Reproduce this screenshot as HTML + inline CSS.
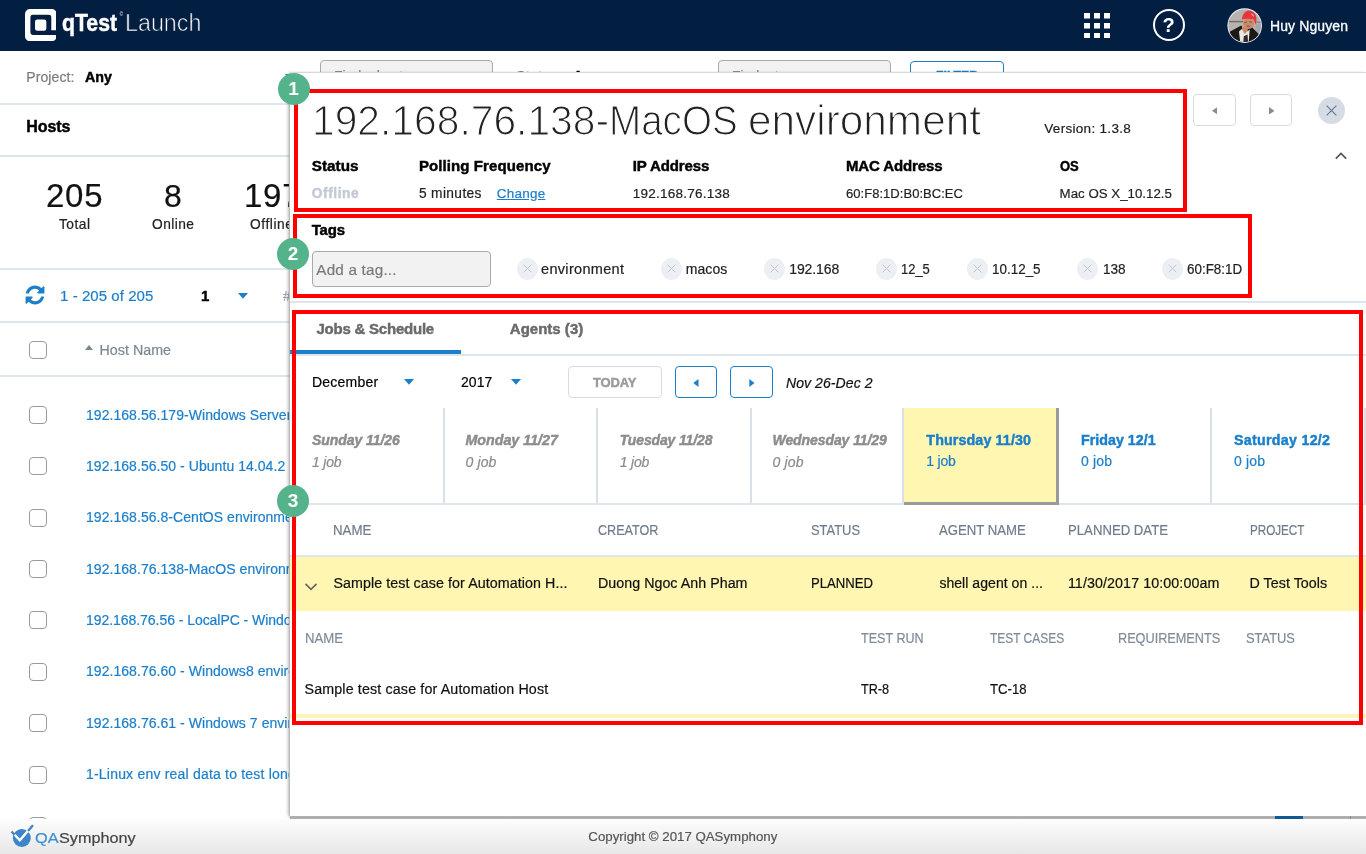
<!DOCTYPE html>
<html lang="en">
<head>
<meta charset="utf-8">
<title>qTest Launch - Hosts</title>
<style>
html,body{margin:0;padding:0}
body{width:1366px;height:854px;overflow:hidden;position:relative;background:#fff;font-family:"Liberation Sans",Arial,sans-serif;color:#111}
.abs,.t,.ln,.cb,svg{position:absolute}
.t{white-space:nowrap;line-height:1;transform-origin:0 50%;-webkit-text-stroke:.2px}
.g{will-change:transform}
.b{font-weight:bold;-webkit-text-stroke:.45px}.i{font-style:italic}.u{text-decoration:underline}
.thin{-webkit-text-stroke:1.2px #fff}
.thin-d{-webkit-text-stroke:.7px #021f42}
.sb{-webkit-text-stroke:.3px #fff}
.sbg{-webkit-text-stroke:.3px #444}
#hdr{position:absolute;left:0;top:0;width:1366px;height:51px;background:#021f42}
#app{position:absolute;left:0;top:51px;width:1366px;height:768px;overflow:hidden}
#app>.in{position:absolute;left:0;top:-51px;width:1366px;height:854px}
.ln{left:0;width:1366px;height:2px;background:#dfe5ec}
.cb{left:29px;width:16px;height:16px;border:1px solid #9a9a9a;border-radius:4px;background:#fff}
.inp{position:absolute;height:34px;box-sizing:border-box;border:1px solid #a9a9a9;border-radius:4px;background:#f2f2f2}
#panel{position:absolute;left:290px;top:73px;width:1076px;height:743px;background:#fff;box-shadow:-1px 0 0 #b9b9b9,0 -1px 0 #d9d9d9,0 2px 2px #999,-2px 0 3px rgba(0,0,0,.25);overflow:hidden}
#panel>.in{position:absolute;left:-290px;top:-73px;width:1366px;height:854px}
.red{position:absolute;box-sizing:border-box;border:4px solid #f00}
.badge{position:absolute;width:32px;height:32px;border-radius:50%;background:#55b38b;color:#fff;font-weight:bold;font-size:19px;line-height:32px;text-align:center}
.btn{position:absolute;box-sizing:border-box;border:1px solid #d3dbe6;border-radius:4px;background:#fff}
.btn.bl{border-color:#1b7fcb}
.tagx{position:absolute;width:21px;height:21.500px;border-radius:50%;background:#eceff3}
.tagx svg{left:6px;top:6.200px}
.vl{position:absolute;top:408px;width:2px;height:95px;background:#d9e0e9}
#foot{position:absolute;left:0;top:819px;width:1366px;height:35px;background:linear-gradient(#fdfdfd,#f3f3f3 45%,#e7e7e7)}
</style>
</head>
<body>
<div id="app"><div class="in g">
<!-- filter bar -->
<div class="inp" style="left:320px;top:60px;width:173px"></div>
<div class="inp" style="left:718px;top:60px;width:173px"></div>
<div class="btn bl" style="left:910px;top:61px;width:94px;height:32px"></div>
<span class="t" style="left:26.3px;top:70.0px;font-size:14px;letter-spacing:0.08px;color:#7b7b7b;">Project:</span>
<span class="t b" style="left:85.0px;top:70.0px;font-size:14.25px;letter-spacing:0.04px;color:#000;">Any</span>
<span class="t" style="left:516.0px;top:69.3px;font-size:14.5px;letter-spacing:0.14px;color:#7b7b7b;">Status:</span>
<span class="t b" style="left:573.0px;top:69.3px;font-size:14.25px;letter-spacing:0.04px;color:#000;">Any</span>
<span class="t" style="left:334.0px;top:69.3px;font-size:14px;color:#8a8a8a;">Find a host</span>
<span class="t" style="left:732.0px;top:69.3px;font-size:14px;color:#8a8a8a;">Find a tag</span>
<span class="t b" style="left:936.0px;top:69.2px;font-size:13px;transform:scaleX(0.9432);color:#1b7fcb;">FILTER</span>
<span class="t b" style="left:26.3px;top:119.0px;font-size:16px;letter-spacing:-0.11px;color:#000;">Hosts</span>
<span class="t" style="left:46.0px;top:179.0px;font-size:33px;letter-spacing:0.72px;color:#111;">205</span>
<span class="t" style="left:59.0px;top:218.1px;font-size:13.75px;letter-spacing:0.49px;color:#222;">Total</span>
<span class="t" style="left:164.0px;top:180.0px;font-size:32px;color:#111;">8</span>
<span class="t" style="left:152.0px;top:218.1px;font-size:13.75px;letter-spacing:0.45px;color:#222;">Online</span>
<span class="t" style="left:244.0px;top:179.0px;font-size:33px;letter-spacing:0.72px;color:#111;">197</span>
<span class="t" style="left:250.0px;top:218.1px;font-size:13.75px;letter-spacing:0.58px;color:#222;">Offline</span>
<span class="t" style="left:60.0px;top:287.6px;font-size:15px;letter-spacing:0.06px;color:#1b7fcb;">1 - 205 of 205</span>
<span class="t b" style="left:201.0px;top:287.6px;font-size:15px;color:#000;">1</span>
<span class="t" style="left:283.0px;top:288.6px;font-size:14px;color:#9aa4b0;">#</span>
<span class="t" style="left:99.5px;top:342.6px;font-size:14.25px;letter-spacing:0.03px;color:#7b8794;">Host Name</span>
<span class="t" style="left:86.0px;top:407.6px;font-size:14px;letter-spacing:0.05px;color:#1b7fcb;">192.168.56.179-Windows Server 2012</span>
<span class="t" style="left:86.0px;top:458.9px;font-size:14px;letter-spacing:0.05px;color:#1b7fcb;">192.168.56.50 - Ubuntu 14.04.2 LTS</span>
<span class="t" style="left:86.0px;top:510.3px;font-size:14px;letter-spacing:0.05px;color:#1b7fcb;">192.168.56.8-CentOS environment</span>
<span class="t" style="left:86.0px;top:561.7px;font-size:14px;letter-spacing:0.05px;color:#1b7fcb;">192.168.76.138-MacOS environment</span>
<span class="t" style="left:86.0px;top:613.1px;font-size:14px;letter-spacing:-0.05px;color:#1b7fcb;">192.168.76.56 - LocalPC - Windows 10</span>
<span class="t" style="left:86.0px;top:664.4px;font-size:14px;letter-spacing:0.05px;color:#1b7fcb;">192.168.76.60 - Windows8 environment</span>
<span class="t" style="left:86.0px;top:715.7px;font-size:14px;letter-spacing:0.05px;color:#1b7fcb;">192.168.76.61 - Windows 7 environment</span>
<span class="t" style="left:86.0px;top:767.1px;font-size:14px;letter-spacing:0.20px;color:#1b7fcb;">1-Linux env real data to test long name</span>
<div class="ln" style="top:102.500px"></div>
<div class="ln" style="top:154.500px"></div>
<div class="ln" style="top:267.500px"></div>
<div class="ln" style="top:320.500px"></div>
<div class="ln" style="top:375px"></div>
<svg style="left:24px;top:284px" width="22" height="22" viewBox="0 0 1792 1792"><path fill="#1b7fcb" d="M1639 1056q0 5-1 7-64 268-268 434.500t-478 166.500q-146 0-282.500-55t-243.500-157l-129 129q-19 19-45 19t-45-19-19-45v-448q0-26 19-45t45-19h448q26 0 45 19t19 45-19 45l-137 137q71 66 161 102t187 36q134 0 250-65t186-179q11-17 53-117 8-23 30-23h192q13 0 22.500 9.500t9.500 22.500zm25-800v448q0 26-19 45t-45 19h-448q-26 0-45-19t-19-45 19-45l138-138q-148-137-349-137-134 0-250 65t-186 179q-11 17-53 117-8 23-30 23h-199q-13 0-22.500-9.500t-9.500-22.500v-7q65-268 270-434.500t480-166.500q146 0 284 55.500t245 156.500l130-129q19-19 45-19t45 19 19 45z"/></svg>
<svg style="left:284.600px;top:73.500px" width="10" height="6" viewBox="0 0 10 6"><path fill="#1b7fcb" d="M0 0h10L5 5.800z"/></svg>
<svg style="left:238px;top:292.500px" width="10" height="6" viewBox="0 0 10 6"><path fill="#1b7fcb" d="M0 0h10L5 5.800z"/></svg>
<svg style="left:85px;top:344.500px" width="8" height="5" viewBox="0 0 8 5"><path fill="#7b8794" d="M0 5h8L4 0z"/></svg>
<div class="cb" style="top:340.500px"></div>
<div class="cb" style="top:406.0px"></div>
<div class="cb" style="top:457.4px"></div>
<div class="cb" style="top:508.7px"></div>
<div class="cb" style="top:560.1px"></div>
<div class="cb" style="top:611.4px"></div>
<div class="cb" style="top:662.8px"></div>
<div class="cb" style="top:714.2px"></div>
<div class="cb" style="top:765.5px"></div>
<div class="cb" style="top:816.9px"></div>

</div></div>

<header id="hdr" class="g">
<svg style="left:24.700px;top:8.800px" width="31.700" height="32.100" viewBox="0 0 31.700 32.500" preserveAspectRatio="none"><path fill="#fff" fill-rule="evenodd" d="M5 0h21.700a5 5 0 0 1 5 5v16.400h-5.400V8.200a2.500 2.500 0 0 0-2.500-2.500H7.900a2.500 2.500 0 0 0-2.500 2.500v15.600a2.500 2.500 0 0 0 2.500 2.500h23.800v1.200a5 5 0 0 1-5 5H5a5 5 0 0 1-5-5V5a5 5 0 0 1 5-5z"/><rect x="10.050" y="10.700" width="11.300" height="11.300" rx="2.200" fill="#fff"/></svg>
<span class="t b" style="left:62.1px;top:11.5px;font-size:23px;transform:scaleX(0.9222);color:#fff;">qTest</span>
<span class="t thin-d" style="left:124.9px;top:11.5px;font-size:23.5px;transform:scaleX(0.9908);color:#fff;">Launch</span>
<span class="t sb" style="left:1270.0px;top:18.7px;font-size:14px;letter-spacing:0.11px;color:#fff;">Huy Nguyen</span>
<span class="t" style="left:119.800px;top:12.800px;font-size:4.500px;color:#8b98ad">©</span>
<svg style="left:1084px;top:12.500px" width="26" height="25.500" viewBox="0 0 26 25.500"><g fill="#fff"><rect x="0" y="0" width="6" height="5.500"/><rect x="10" y="0" width="6" height="5.500"/><rect x="20" y="0" width="6" height="5.500"/><rect x="0" y="10" width="6" height="5.500"/><rect x="10" y="10" width="6" height="5.500"/><rect x="20" y="10" width="6" height="5.500"/><rect x="0" y="20" width="6" height="5.500"/><rect x="10" y="20" width="6" height="5.500"/><rect x="20" y="20" width="6" height="5.500"/></g></svg>
<div class="abs" style="left:1152.500px;top:9.300px;width:28px;height:28px;border:2px solid #fff;border-radius:50%;color:#fff;font-weight:bold;font-size:20px;line-height:29px;text-align:center">?</div>
<svg style="left:1226.500px;top:8px" width="35.500" height="35.500" viewBox="0 0 35.500 35.500"><defs><clipPath id="av"><circle cx="17.700" cy="17.600" r="16.400"/></clipPath></defs><circle cx="17.700" cy="17.600" r="17.300" fill="#eef1f5"/><g clip-path="url(#av)"><rect width="36" height="36" fill="#b7b3b0"/><rect x="0" y="12.900" width="16" height="1.400" fill="#6f6b68"/><rect x="28" y="13.500" width="8" height="1.600" fill="#8d8988"/><rect x="28.500" y="16" width="7" height="12" fill="#a9a7ac"/><path d="M0 36V26l3.600-2.800 10.700-5.600 3 4 7.700-2.300 6.100 6.200 4.400 4V36z" fill="#1c1815"/><path d="M14.800 18.500l6 1.500v5.500l-4.800 2.500z" fill="#c48a69"/><path d="M12 23.500l3-2.700 2.300 5.200 5.400-4.500-1 12.500h-8.500z" fill="#ebe8e4"/><path d="M16.800 28.200l3.700-1.700.6 8h-4.800z" fill="#2e2a35"/><ellipse cx="21.600" cy="15.400" rx="5.600" ry="5.500" fill="#c98d6c"/><path d="M17.500 14.500l2.500-.5M22.500 13.800l2.500.4M19.500 18l3.500.3" stroke="#7a4a38" stroke-width=".9" fill="none"/><path d="M14.850 11.600c.3-5 3.300-9.200 7.300-9.200 4.500 0 7.300 4 7.300 8.400 0 2-.4 4.200-1.200 5.700-.5-2.200-1-4-2-5.200-3.800-.8-8-.7-11.400.3z" fill="#e8363f"/><path d="M24.500 5.500l2.200 2.800" stroke="#f4a9ab" stroke-width="1.200"/></g></svg>
</header>

<aside id="panel"><div class="in g">
<!-- shapes -->
<div class="red" style="left:294px;top:89px;width:893px;height:123px"></div>
<div class="red" style="left:293px;top:214px;width:959px;height:84px"></div>
<div class="ln" style="left:290px;top:300.500px"></div>
<div class="btn" style="left:1193px;top:93.700px;width:43px;height:32px"></div>
<div class="btn" style="left:1250px;top:93.700px;width:42px;height:32px"></div>
<svg style="left:1211.500px;top:106.800px" width="5.500" height="7.600" viewBox="0 0 5.500 7.600"><path fill="#8c8c8c" d="M5.500 0v7.600L0 3.800z"/></svg>
<svg style="left:1268.700px;top:106.800px" width="5.500" height="7.600" viewBox="0 0 5.500 7.600"><path fill="#8c8c8c" d="M0 0v7.600L5.500 3.800z"/></svg>
<div class="abs" style="left:1318px;top:96.700px;width:27px;height:27px;border-radius:50%;background:#d5dce6"></div>
<svg style="left:1326px;top:104.700px" width="11" height="11" viewBox="0 0 11 11"><path d="M.6.600l9.800 9.800M10.400.600L.6 10.400" stroke="#66758a" stroke-width="1.100" fill="none"/></svg>
<svg style="left:1333.500px;top:151px" width="14" height="9" viewBox="0 0 14 9"><path d="M1.800 7.600L7 2.400l5.200 5.200" stroke="#555" stroke-width="1.700" fill="none"/></svg>
<div class="inp" style="left:312px;top:251.200px;width:178.500px;height:35.600px"></div>

<div class="tagx" style="left:516.5px;top:258.300px"><svg width="9" height="9" viewBox="0 0 9 9"><path d="M.7.700l7.600 7.600M8.300.700L.7 8.300" stroke="#c0c6cf" stroke-width="1" fill="none"/></svg></div>
<div class="tagx" style="left:660.8px;top:258.300px"><svg width="9" height="9" viewBox="0 0 9 9"><path d="M.7.700l7.600 7.600M8.300.700L.7 8.300" stroke="#c0c6cf" stroke-width="1" fill="none"/></svg></div>
<div class="tagx" style="left:764.2px;top:258.300px"><svg width="9" height="9" viewBox="0 0 9 9"><path d="M.7.700l7.600 7.600M8.300.700L.7 8.300" stroke="#c0c6cf" stroke-width="1" fill="none"/></svg></div>
<div class="tagx" style="left:875.9px;top:258.300px"><svg width="9" height="9" viewBox="0 0 9 9"><path d="M.7.700l7.600 7.600M8.300.700L.7 8.300" stroke="#c0c6cf" stroke-width="1" fill="none"/></svg></div>
<div class="tagx" style="left:966.9px;top:258.300px"><svg width="9" height="9" viewBox="0 0 9 9"><path d="M.7.700l7.600 7.600M8.300.700L.7 8.300" stroke="#c0c6cf" stroke-width="1" fill="none"/></svg></div>
<div class="tagx" style="left:1076.9px;top:258.300px"><svg width="9" height="9" viewBox="0 0 9 9"><path d="M.7.700l7.600 7.600M8.300.700L.7 8.300" stroke="#c0c6cf" stroke-width="1" fill="none"/></svg></div>
<div class="tagx" style="left:1162.1px;top:258.300px"><svg width="9" height="9" viewBox="0 0 9 9"><path d="M.7.700l7.600 7.600M8.300.700L.7 8.300" stroke="#c0c6cf" stroke-width="1" fill="none"/></svg></div>
<!-- tabs -->
<div class="ln" style="left:290px;top:354px"></div>
<div class="abs" style="left:290px;top:349.500px;width:170.500px;height:4.500px;background:#1b7fcb"></div>
<svg style="left:404px;top:378.500px" width="10" height="6" viewBox="0 0 10 6"><path fill="#1b7fcb" d="M0 0h10L5 5.800z"/></svg>
<svg style="left:510.500px;top:378.500px" width="10" height="6" viewBox="0 0 10 6"><path fill="#1b7fcb" d="M0 0h10L5 5.800z"/></svg>
<div class="btn" style="left:568px;top:366.300px;width:94px;height:31.500px"></div>
<div class="btn bl" style="left:674.500px;top:366.300px;width:42.500px;height:31.500px"></div>
<div class="btn bl" style="left:730px;top:366.300px;width:42.500px;height:31.500px"></div>
<svg style="left:693px;top:378.800px" width="6" height="8" viewBox="0 0 6 8"><path fill="#1b7fcb" d="M5.500 0v8L.3 4z"/></svg>
<svg style="left:748.500px;top:378.800px" width="6" height="8" viewBox="0 0 6 8"><path fill="#1b7fcb" d="M.3 0v8L5.500 4z"/></svg>
<!-- days -->
<div class="vl" style="left:442.500px"></div><div class="vl" style="left:596px"></div><div class="vl" style="left:749.500px"></div><div class="vl" style="left:902px"></div><div class="vl" style="left:1210px"></div><div class="vl" style="left:1363.500px"></div>
<div class="abs" style="left:904px;top:408px;width:155px;height:96.700px;background:#9a9a9a"></div>
<div class="abs" style="left:904px;top:408px;width:151.800px;height:94px;background:#fff6b1"></div>
<div class="ln" style="left:290px;top:503px;width:614px"></div>
<div class="ln" style="left:1059px;top:503px;width:307px"></div>
<!-- table -->
<div class="ln" style="left:290px;top:555.300px"></div>
<div class="abs" style="left:290px;top:557.300px;width:1076px;height:54.200px;background:#fff6b1"></div>
<svg style="left:304px;top:582px" width="14" height="10" viewBox="0 0 14 10"><path d="M1.500 1.800L7 7.300l5.500-5.500" stroke="#666" stroke-width="1.700" fill="none"/></svg>
<div class="abs" style="left:290px;top:713.500px;width:1076px;height:4px;background:#fff4b4"></div>
<h1 style="margin:0;font:inherit"><span class="t thin" style="left:312.0px;top:99.1px;font-size:43px;transform:scaleX(0.9482);color:#222;">192.168.76.138-</span><span class="t thin" style="left:608.6px;top:99.1px;font-size:43px;transform:scaleX(0.8976);color:#222;">MacOS</span> <span class="t thin" style="left:747.9px;top:99.1px;font-size:43px;transform:scaleX(0.9846);color:#222;">environment</span></h1>
<span class="t" style="left:1044.3px;top:122.4px;font-size:13.5px;letter-spacing:0.30px;color:#222;">Version: 1.3.8</span>
<span class="t b" style="left:311.8px;top:157.7px;font-size:15.25px;letter-spacing:0.02px;color:#000;">Status</span>
<span class="t b" style="left:418.9px;top:157.6px;font-size:15px;letter-spacing:0.10px;color:#000;">Polling Frequency</span>
<span class="t b" style="left:632.7px;top:157.6px;font-size:15px;letter-spacing:-0.09px;color:#000;">IP Address</span>
<span class="t b" style="left:846.0px;top:157.6px;font-size:15px;letter-spacing:-0.13px;color:#000;">MAC Address</span>
<span class="t b" style="left:1059.6px;top:157.6px;font-size:15px;transform:scaleX(0.8669);color:#000;">OS</span>
<span class="t b" style="left:311.8px;top:186.5px;font-size:13.75px;letter-spacing:0.56px;color:#c3cad5;">Offline</span>
<span class="t" style="left:418.9px;top:186.5px;font-size:13.75px;letter-spacing:0.37px;color:#222;">5 minutes</span>
<span class="t u" style="left:496.8px;top:186.5px;font-size:13.5px;letter-spacing:0.22px;color:#1b7fcb;">Change</span>
<span class="t" style="left:632.8px;top:186.5px;font-size:13.5px;letter-spacing:0.24px;color:#222;">192.168.76.138</span>
<span class="t" style="left:846.0px;top:186.5px;font-size:13px;letter-spacing:0.04px;color:#222;">60:F8:1D:B0:BC:EC</span>
<span class="t" style="left:1059.6px;top:186.6px;font-size:13.25px;letter-spacing:0.02px;color:#222;">Mac OS X_10.12.5</span>
<span class="t b" style="left:311.8px;top:221.7px;font-size:15px;letter-spacing:-0.24px;color:#000;">Tags</span>
<span class="t" style="left:316.3px;top:262.0px;font-size:15.25px;letter-spacing:0.20px;color:#7a7a7a;">Add a tag...</span>
<span class="t" style="left:541.0px;top:262.2px;font-size:14.5px;letter-spacing:0.32px;color:#222;">environment</span>
<span class="t" style="left:685.7px;top:262.2px;font-size:14px;letter-spacing:0.09px;color:#222;">macos</span>
<span class="t" style="left:789.2px;top:262.2px;font-size:14px;letter-spacing:-0.08px;color:#222;">192.168</span>
<span class="t" style="left:901.4px;top:262.2px;font-size:14px;transform:scaleX(0.9244);color:#222;">12_5</span>
<span class="t" style="left:992.2px;top:262.2px;font-size:14px;transform:scaleX(0.9603);color:#222;">10.12_5</span>
<span class="t" style="left:1102.9px;top:262.2px;font-size:14px;transform:scaleX(0.9675);color:#222;">138</span>
<span class="t" style="left:1186.8px;top:262.2px;font-size:14px;transform:scaleX(0.9584);color:#222;">60:F8:1D</span>
<span class="t b" style="left:316.4px;top:321.0px;font-size:15px;letter-spacing:-0.22px;color:#6a6a6a;">Jobs &amp; Schedule</span>
<span class="t b" style="left:509.8px;top:321.0px;font-size:15px;letter-spacing:0.01px;color:#6a6a6a;">Agents (3)</span>
<span class="t" style="left:312.0px;top:375.4px;font-size:14px;letter-spacing:0.23px;color:#000;">December</span>
<span class="t" style="left:461.0px;top:375.4px;font-size:14px;letter-spacing:0.05px;color:#000;">2017</span>
<span class="t b" style="left:593.0px;top:375.5px;font-size:13px;letter-spacing:-0.14px;color:#9b9b9b;">TODAY</span>
<span class="t i" style="left:786.0px;top:375.6px;font-size:14px;letter-spacing:0.08px;color:#111;">Nov 26-Dec 2</span>
<span class="t b i" style="left:312.0px;top:433.2px;font-size:14px;letter-spacing:-0.06px;color:#8c8c8c;">Sunday 11/26</span>
<span class="t i" style="left:312.0px;top:454.5px;font-size:14px;letter-spacing:-0.19px;color:#8c8c8c;">1 job</span>
<span class="t b i" style="left:465.4px;top:433.3px;font-size:14.25px;letter-spacing:0.01px;color:#8c8c8c;">Monday 11/27</span>
<span class="t i" style="left:465.4px;top:454.5px;font-size:14px;letter-spacing:0.16px;color:#8c8c8c;">0 job</span>
<span class="t b i" style="left:619.7px;top:433.2px;font-size:14px;letter-spacing:-0.14px;color:#8c8c8c;">Tuesday 11/28</span>
<span class="t i" style="left:619.7px;top:454.5px;font-size:14px;letter-spacing:-0.19px;color:#8c8c8c;">1 job</span>
<span class="t b i" style="left:772.5px;top:433.2px;font-size:14px;letter-spacing:-0.08px;color:#8c8c8c;">Wednesday 11/29</span>
<span class="t i" style="left:772.5px;top:454.5px;font-size:14px;letter-spacing:0.16px;color:#8c8c8c;">0 job</span>
<span class="t b" style="left:926.3px;top:433.1px;font-size:14.25px;letter-spacing:0.13px;color:#1b7fcb;">Thursday 11/30</span>
<span class="t" style="left:926.3px;top:454.4px;font-size:14px;letter-spacing:-0.19px;color:#1b7fcb;">1 job</span>
<span class="t b" style="left:1081.0px;top:433.1px;font-size:14.25px;letter-spacing:0.01px;color:#1b7fcb;">Friday 12/1</span>
<span class="t" style="left:1081.0px;top:454.4px;font-size:14px;letter-spacing:0.16px;color:#1b7fcb;">0 job</span>
<span class="t b" style="left:1234.0px;top:433.1px;font-size:14.25px;letter-spacing:0.28px;color:#1b7fcb;">Saturday 12/2</span>
<span class="t" style="left:1234.0px;top:454.4px;font-size:14px;letter-spacing:0.16px;color:#1b7fcb;">0 job</span>
<span class="t" style="left:333.4px;top:523.0px;font-size:14px;transform:scaleX(0.9468);color:#6f7c8c;">NAME</span>
<span class="t" style="left:598.0px;top:523.0px;font-size:14px;transform:scaleX(0.8994);color:#6f7c8c;">CREATOR</span>
<span class="t" style="left:811.2px;top:523.0px;font-size:14px;transform:scaleX(0.9218);color:#6f7c8c;">STATUS</span>
<span class="t" style="left:939.4px;top:523.0px;font-size:14px;transform:scaleX(0.9392);color:#6f7c8c;">AGENT NAME</span>
<span class="t" style="left:1067.9px;top:523.0px;font-size:14px;transform:scaleX(0.9405);color:#6f7c8c;">PLANNED DATE</span>
<span class="t" style="left:1249.5px;top:523.0px;font-size:14px;transform:scaleX(0.8325);color:#6f7c8c;">PROJECT</span>
<span class="t" style="left:333.4px;top:576.2px;font-size:14.25px;letter-spacing:0.08px;color:#111;">Sample test case for Automation H...</span>
<span class="t" style="left:598.0px;top:576.2px;font-size:14.25px;letter-spacing:0.03px;color:#111;">Duong Ngoc Anh Pham</span>
<span class="t" style="left:811.2px;top:576.2px;font-size:14px;transform:scaleX(0.9374);color:#111;">PLANNED</span>
<span class="t" style="left:939.4px;top:576.2px;font-size:14px;letter-spacing:0.05px;color:#111;">shell agent on ...</span>
<span class="t" style="left:1067.9px;top:576.2px;font-size:14.25px;letter-spacing:0.10px;color:#111;">11/30/2017 10:00:00am</span>
<span class="t" style="left:1249.5px;top:576.2px;font-size:14.25px;letter-spacing:0.05px;color:#111;">D Test Tools</span>
<span class="t" style="left:304.5px;top:630.8px;font-size:14px;transform:scaleX(0.9418);color:#7f8b99;">NAME</span>
<span class="t" style="left:861.4px;top:630.8px;font-size:14px;transform:scaleX(0.8975);color:#7f8b99;">TEST RUN</span>
<span class="t" style="left:989.5px;top:630.8px;font-size:14px;transform:scaleX(0.8528);color:#7f8b99;">TEST CASES</span>
<span class="t" style="left:1118.0px;top:630.8px;font-size:14px;transform:scaleX(0.9061);color:#7f8b99;">REQUIREMENTS</span>
<span class="t" style="left:1245.7px;top:630.8px;font-size:14px;transform:scaleX(0.9199);color:#7f8b99;">STATUS</span>
<span class="t" style="left:304.5px;top:681.8px;font-size:14.25px;letter-spacing:0.15px;color:#111;">Sample test case for Automation Host</span>
<span class="t" style="left:861.4px;top:681.8px;font-size:14px;transform:scaleX(0.9028);color:#111;">TR-8</span>
<span class="t" style="left:989.5px;top:681.8px;font-size:14px;transform:scaleX(0.9382);color:#111;">TC-18</span>
<div class="red" style="left:292px;top:310px;width:1071px;height:415px"></div>
</div></aside>

<div id="badges" class="g">
<div class="badge" style="left:277.500px;top:73px">1</div>
<div class="badge" style="left:277px;top:237.700px">2</div>
<div class="badge" style="left:277px;top:485px">3</div>
</div>
<footer id="foot"></footer>
<div class="abs g" style="left:0;top:0;width:1366px;height:854px;pointer-events:none">
<div class="abs" style="left:290px;top:815.700px;width:1076px;height:3.300px;background:linear-gradient(#b4b4b4,#a9a9a9 60%,#b8b8b8)"></div>
<div class="abs" style="left:1275px;top:815.700px;width:28px;height:3.300px;background:#0f5a94"></div>
<div class="abs" style="left:1350px;top:815.700px;width:1px;height:3.300px;background:#8f8f8f"></div>
<svg style="left:9px;top:822px" width="28" height="28" viewBox="0 0 28 28"><circle cx="12.800" cy="16" r="9" fill="#3d85c8"/><path d="M2.500 9.500l8.300 8.800L24 3.200" stroke="#3d85c8" stroke-width="2.200" fill="none"/><path d="M5.600 12.800l5.200 5.500 8.200-9.400" stroke="#fff" stroke-width="2.400" fill="none"/></svg>
<span class="t" style="left:35.0px;top:830.0px;font-size:15.5px;transform:scaleX(1.0533);color:#3b8fd3;">QA</span><span class="t" style="left:58.9px;top:830.0px;font-size:15.5px;transform:scaleX(1.0460);color:#444;">Symphony</span>
<span class="t" style="left:588.3px;top:829.5px;font-size:13.25px;letter-spacing:0.01px;color:#555;">Copyright © 2017 QASymphony</span>
</div>
</body>
</html>
